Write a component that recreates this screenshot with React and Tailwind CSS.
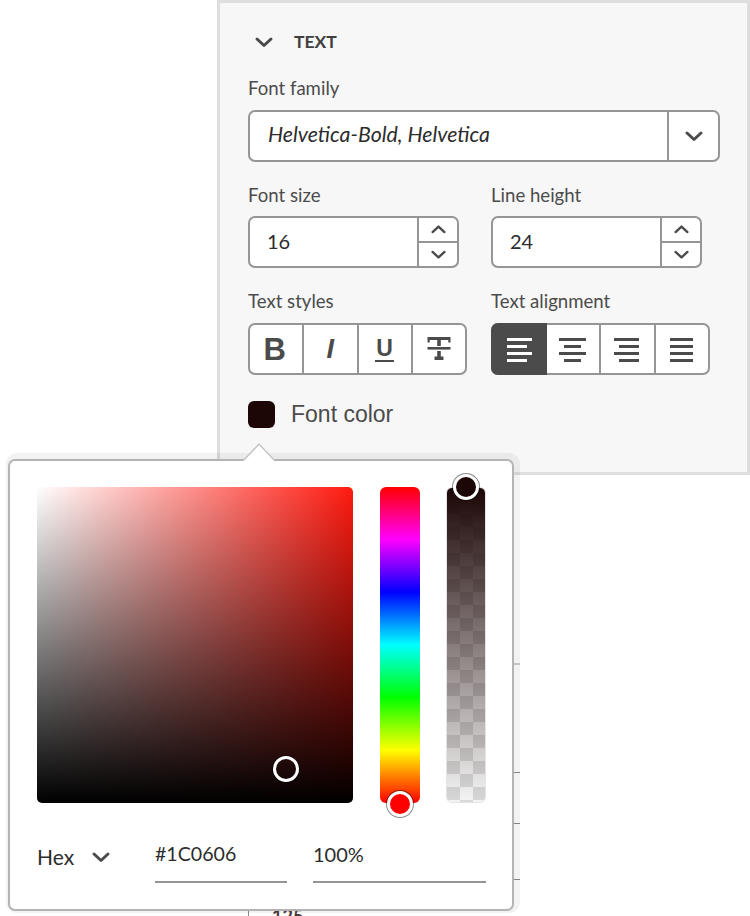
const clean = "font-['Lato','Noto_Sans',sans-serif]";

function Chevron({ size = 20, up = false, stroke = 3, className = '' }) {
  return (
    <svg width={size} height={size} viewBox="0 0 20 20" fill="none" className={className}>
      <path
        d={up ? 'M3 13l7-6.5 7 6.5' : 'M3 7l7 6.5L17 7'}
        stroke="#4b4b4b"
        strokeWidth={stroke}
        strokeLinecap="round"
        strokeLinejoin="round"
      />
    </svg>
  );
}

function Label({ children }) {
  return <div className="h-6 text-[18.6px] leading-6 text-[#4b4b4b]">{children}</div>;
}

function Stepper({ value }) {
  return (
    <div className="mt-[9px] flex h-[52px] w-[211px] rounded-[7px] border-2 border-[#959595] bg-white">
      <div className="flex flex-1 items-center pb-[2px] pl-[17px] text-[20px] text-[#2c2c2c]">{value}</div>
      <div className="flex w-[40px] flex-col border-l-2 border-[#959595]">
        <div className="flex flex-1 items-center justify-center border-b-2 border-[#959595]">
          <Chevron size={17} up stroke={2.8} />
        </div>
        <div className="flex flex-1 items-center justify-center">
          <Chevron size={17} stroke={2.8} />
        </div>
      </div>
    </div>
  );
}

function Cell({ children }) {
  return (
    <div className="flex flex-1 items-center justify-center border-l-2 border-[#959595] first:border-l-0">
      {children}
    </div>
  );
}

function Lines({ rows, color = '#4b4b4b' }) {
  return (
    <svg width="28" height="26" viewBox="0 0 28 26">
      {rows.map(([x, w], i) => (
        <rect key={i} x={x} y={2 + i * 7} width={w} height="3" fill={color} />
      ))}
    </svg>
  );
}

export default function App() {
  return (
    <div className={'relative h-[916px] w-[750px] overflow-hidden bg-white ' + clean}>
      {/* bits of the page behind the popover */}
      <div className="absolute left-[514px] top-[663px] h-[2px] w-[6px] bg-[#cfcfcf]" />
      <div className="absolute left-[514px] top-[772px] h-[1px] w-[6px] bg-[#8a8a8a]" />
      <div className="absolute left-[514px] top-[823px] h-[1px] w-[6px] bg-[#8a8a8a]" />
      <div className="absolute left-[514px] top-[879px] h-[1px] w-[6px] bg-[#8a8a8a]" />
      <div className="absolute left-[248px] top-[910px] h-[6px] w-[1px] bg-[#8a8a8a]" />
      <div className="absolute left-[272px] top-[904px] text-[18px] font-bold leading-6 text-[#4b3a3a]">125</div>

      {/* text panel */}
      <div className="ml-[217px] h-[475px] w-[533px] border-[3px] border-[#dedede] bg-[#f7f7f7] pl-[28px] pt-[27px]">
        <div className="flex h-6 items-center">
          <Chevron size={20} className="ml-[6px]" />
          <span className="ml-[20px] text-[17.5px] font-bold leading-6 text-[#3f3f3f]">TEXT</span>
        </div>

        <div className="mt-[22px]">
          <Label>Font family</Label>
        </div>
        <div className="mt-[10px] flex h-[52px] w-[472px] rounded-[7px] border-2 border-[#959595] bg-white">
          <div className="flex flex-1 items-center pb-[2px] pl-[18px] text-[21.3px] italic text-[#2c2c2c]">
            Helvetica-Bold, Helvetica
          </div>
          <div className="flex w-[51px] items-center justify-center border-l-2 border-[#959595]">
            <Chevron size={20} />
          </div>
        </div>

        <div className="mt-[21px] flex">
          <div className="w-[243px]">
            <Label>Font size</Label>
            <Stepper value="16" />
          </div>
          <div>
            <Label>Line height</Label>
            <Stepper value="24" />
          </div>
        </div>

        <div className="mt-[21px] flex">
          <div className="w-[243px]">
            <Label>Text styles</Label>
            <div className="mt-[10px] flex h-[52px] w-[219px] overflow-hidden rounded-[7px] border-2 border-[#959595] bg-white font-['Liberation_Sans',sans-serif] text-[#4b4b4b]">
              <Cell>
                <span className="mr-[3px] text-[31px] font-bold leading-none">B</span>
              </Cell>
              <Cell>
                <span className="text-[27px] font-bold italic leading-none">I</span>
              </Cell>
              <Cell>
                <span className="border-b-[2px] border-[#4b4b4b] px-[1px] text-[23px] font-bold leading-[23px]">U</span>
              </Cell>
              <Cell>
                <svg width="26" height="26" viewBox="0 0 26 26" fill="#4b4b4b">
                  <path d="M1.500 1h23v5.500h-2.200V4H14.800v6h-3.600V4H3.700v2.500H1.500z" />
                  <rect x="1.500" y="11" width="23" height="2.600" />
                  <path d="M11.200 15h3.600v5.500h2.700V24h-9v-3.500h2.700z" />
                </svg>
              </Cell>
            </div>
          </div>
          <div>
            <Label>Text alignment</Label>
            <div className="mt-[10px] flex h-[52px] w-[219px] rounded-[7px] border-2 border-[#959595] bg-white">
              <div className="my-[-2px] ml-[-2px] flex w-[56px] items-center justify-center rounded-l-[7px] bg-[#4b4b4b]">
                <Lines color="#ffffff" rows={[[2, 25], [2, 20], [2, 25], [2, 20]]} />
              </div>
              <div className="flex flex-1 items-center justify-center">
                <Lines rows={[[0, 27], [5, 17], [0, 27], [5, 17]]} />
              </div>
              <Cell>
                <Lines rows={[[1, 25], [6, 20], [1, 25], [6, 20]]} />
              </Cell>
              <Cell>
                <Lines rows={[[2, 23], [2, 23], [2, 23], [2, 23]]} />
              </Cell>
            </div>
          </div>
        </div>

        <div className="mt-[26px] flex items-center">
          <div className="h-[27px] w-[27px] rounded-[6px] bg-[#1c0606]" />
          <span className="ml-[16px] font-['Liberation_Sans',sans-serif] text-[23px] leading-[27px] text-[#4b4b4b]">
            Font color
          </span>
        </div>
      </div>

      {/* color picker popover */}
      <div className="absolute left-[8px] top-[459px] h-[452px] w-[506px] rounded-[7px] border-2 border-[#b4b4b4] bg-white pl-[27px] pt-[26px] shadow-[2px_-2px_0_4px_rgba(0,0,0,0.05)]">
        <svg className="absolute left-[233px] top-[-19px]" width="32" height="20" viewBox="0 0 32 20">
          <path d="M0 19L16 2l16 17" fill="#ffffff" stroke="#c4c4c4" strokeWidth="1.500" />
          <rect x="1" y="18.500" width="30" height="2" fill="#ffffff" />
        </svg>

        <div className="flex">
          <div className="relative h-[316px] w-[316px] rounded-[5px] bg-[linear-gradient(to_top,#000000,transparent),linear-gradient(to_right,#ffffff,#ff1a10)]">
            <div className="absolute left-[236px] top-[269px] h-[26px] w-[26px] rounded-full border-[3px] border-white shadow-[0_0_0_1px_rgba(0,0,0,0.5)]" />
          </div>

          <div className="relative ml-[27px] h-[316px] w-[40px] rounded-[6px] bg-[linear-gradient(to_bottom,#ff0000,#ff00ff_16.600%,#0000ff_33.300%,#00ffff_50%,#00ff00_66.600%,#ffff00_83.300%,#ff0000)]">
            <div className="absolute left-[7px] top-[304px] h-[26px] w-[26px] rounded-full border-[3px] border-white bg-[#ff0000] shadow-[0_0_0_1px_rgba(0,0,0,0.45)]" />
          </div>

          <div className="relative ml-[26px] h-[316px] w-[40px] rounded-[6px] border border-[#e4e4e4] bg-[linear-gradient(to_bottom,#1c0606,rgba(28,6,6,0)),repeating-conic-gradient(#d8d8d8_0_25%,#f4f4f4_0_50%)] bg-[length:100%_100%,26px_26px]">
            <div className="absolute left-[6px] top-[-14px] h-[26px] w-[26px] rounded-full border-[3px] border-white bg-[#1c0606] shadow-[0_0_0_1px_rgba(0,0,0,0.45)]" />
          </div>
        </div>

        <div className="mt-[34px] flex text-[20px] text-[#2c2c2c]">
          <div className="flex w-[118px] items-center pb-[6px]">
            <span className="text-[21px] leading-6">Hex</span>
            <Chevron size={20} className="ml-[17px]" />
          </div>
          <div className="h-[46px] w-[132px] border-b-2 border-[#959595] pt-[5px] text-[19.6px] leading-6">#1C0606</div>
          <div className="ml-[26px] h-[46px] w-[173px] border-b-2 border-[#959595] pt-[5px] leading-6">100%</div>
        </div>
      </div>
    </div>
  );
}
